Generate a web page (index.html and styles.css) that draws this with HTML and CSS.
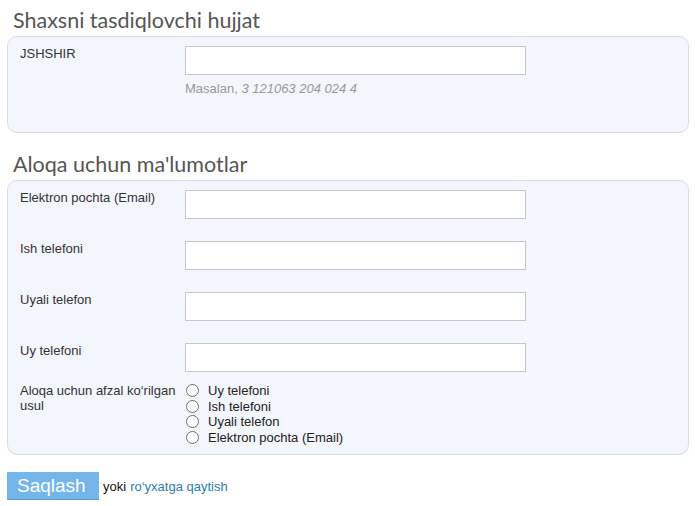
FILE: index.html
```html
<!DOCTYPE html>
<html lang="uz">
<head>
  <meta charset="UTF-8" />
  <title>Shaxsiy ma'lumotlar</title>
  <link rel="stylesheet" href="styles.css">
</head>
<body>

  <form class="profile-form">

    <h2 class="section-title">Shaxsni tasdiqlovchi hujjat</h2>
    <div class="box box-doc">
      <div class="row">
        <label class="row-label" for="jshshir">JSHSHIR</label>
        <div class="row-field">
          <input type="text" id="jshshir" class="text-input" />
          <div class="hint">Masalan, <i>3 121063 204 024 4</i></div>
        </div>
      </div>
    </div>

    <h2 class="section-title">Aloqa uchun ma'lumotlar</h2>
    <div class="box">
      <div class="row">
        <label class="row-label" for="email">Elektron pochta (Email)</label>
        <div class="row-field"><input type="text" id="email" class="text-input" /></div>
      </div>
      <div class="row">
        <label class="row-label" for="work-phone">Ish telefoni</label>
        <div class="row-field"><input type="text" id="work-phone" class="text-input" /></div>
      </div>
      <div class="row">
        <label class="row-label" for="mobile">Uyali telefon</label>
        <div class="row-field"><input type="text" id="mobile" class="text-input" /></div>
      </div>
      <div class="row">
        <label class="row-label" for="home-phone">Uy telefoni</label>
        <div class="row-field"><input type="text" id="home-phone" class="text-input" /></div>
      </div>
      <div class="row row-choice">
        <div class="row-label">Aloqa uchun afzal ko‘rilgan usul</div>
        <div class="row-field">
          <label class="choice"><input type="radio" name="contact" /> Uy telefoni</label>
          <label class="choice"><input type="radio" name="contact" /> Ish telefoni</label>
          <label class="choice"><input type="radio" name="contact" /> Uyali telefon</label>
          <label class="choice"><input type="radio" name="contact" /> Elektron pochta (Email)</label>
        </div>
      </div>
    </div>

    <div class="actions">
      <button type="submit" class="save-btn">Saqlash</button>
      <span class="or">yoki</span>
      <a href="#" class="back-link">ro‘yxatga qaytish</a>
    </div>

  </form>

</body>
</html>
```

FILE: styles.css
```css
* {
  margin: 0;
  padding: 0;
  box-sizing: border-box;
}

body {
  font-family: "Liberation Sans", Arial, sans-serif;
  font-size: 13px;
  color: #222;
  background: #fff;
  padding: 0 6px 0 7px;
}

.section-title {
  font-family: Lato, sans-serif;
  font-weight: normal;
  font-size: 21.5px;
  line-height: 24px;
  color: #555;
  padding: 8px 0 4px 6px;
}

.box + .section-title {
  padding-top: 19px;
}

.box {
  background: #f3f6fc;
  border: 1px solid #d9dde3;
  border-radius: 10px;
  padding: 9px 12px 9px;
}

.box-doc {
  padding-bottom: 36px;
}

.row {
  display: flex;
  line-height: 15px;
}

.row + .row {
  margin-top: 22px;
}

.row + .row-choice {
  margin-top: 11px;
}

.row-label {
  width: 165px;
  flex-shrink: 0;
  padding: 0 8px 0 0;
  color: #333;
}

.text-input {
  display: block;
  width: 341px;
  height: 29px;
  border: 1px solid #c4c6ca;
  background: #fff;
  font: inherit;
  padding: 0 5px;
}

.hint {
  margin-top: 6px;
  color: #999;
}

.choice {
  display: flex;
  align-items: center;
  height: 15.5px;
  color: #222;
}

.choice input {
  appearance: none;
  width: 13px;
  height: 13px;
  margin: 0 9px 0 1px;
  border: 1px solid #6d6d6d;
  border-radius: 50%;
  background: #fff;
}

.actions {
  display: flex;
  align-items: center;
  margin-top: 17px;
}

.save-btn {
  width: 92px;
  height: 28px;
  background: #74b6ea;
  border: none;
  border-bottom: 1px solid #5a9bd0;
  color: #fff;
  font-family: "Liberation Sans", Arial, sans-serif;
  font-size: 19px;
  padding: 0 10px;
  text-align: left;
}

.or {
  margin-left: 4px;
  color: #111;
}

.back-link {
  margin-left: 4px;
  color: #2a7db5;
  text-decoration: none;
}
```
